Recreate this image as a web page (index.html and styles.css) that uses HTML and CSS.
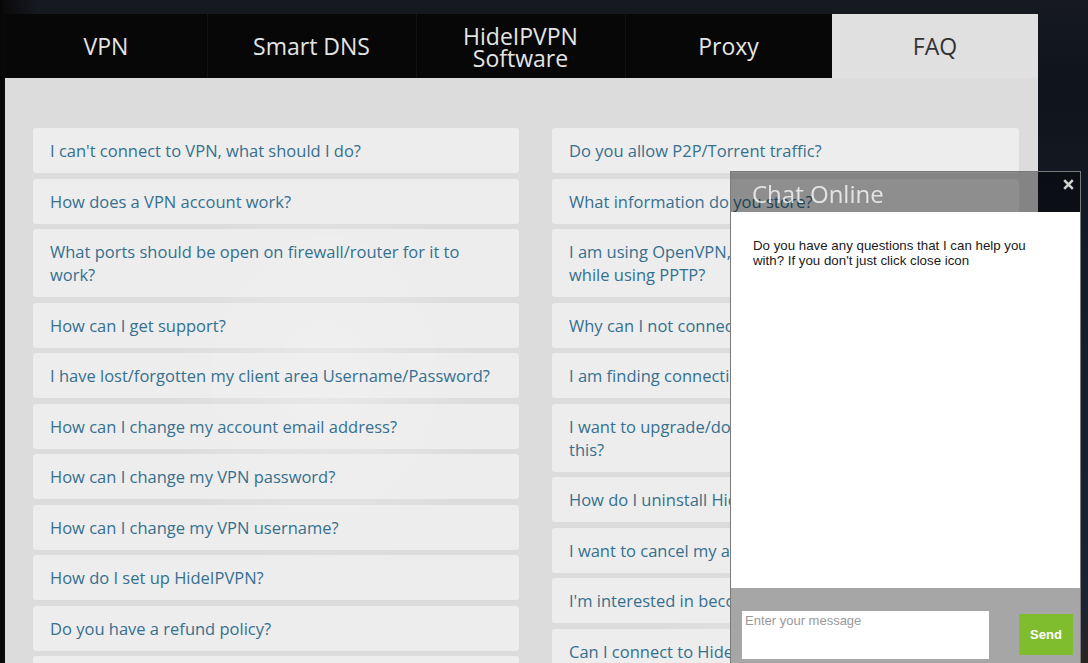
FILE: index.html
```html
<!DOCTYPE html>
<html lang="en">
<head>
<meta charset="utf-8">
<title>FAQ - HideIPVPN</title>
<link rel="stylesheet" href="styles.css">
</head>
<body>
<div class="page">
  <nav class="tabs">
    <div class="tab t1">VPN</div>
    <div class="tab t2">Smart DNS</div>
    <div class="tab t3 tab-two">HideIPVPN<br>Software</div>
    <div class="tab t4">Proxy</div>
    <div class="tab t5 active">FAQ</div>
  </nav>
  <main class="panel">
    <div class="faq-col left">
      <div class="faq">I can't connect to VPN, what should I do?</div>
      <div class="faq">How does a VPN account work?</div>
      <div class="faq">What ports should be open on firewall/router for it to work?</div>
      <div class="faq">How can I get support?</div>
      <div class="faq">I have lost/forgotten my client area Username/Password?</div>
      <div class="faq">How can I change my account email address?</div>
      <div class="faq">How can I change my VPN password?</div>
      <div class="faq">How can I change my VPN username?</div>
      <div class="faq">How do I set up HideIPVPN?</div>
      <div class="faq">Do you have a refund policy?</div>
      <div class="faq">Which payment methods do you accept?</div>
    </div>
    <div class="faq-col right">
      <div class="faq">Do you allow P2P/Torrent traffic?</div>
      <div class="faq">What information do you store?</div>
      <div class="faq">I am using OpenVPN, why is my speed different<br>while using PPTP?</div>
      <div class="faq">Why can I not connect to some servers?</div>
      <div class="faq">I am finding connection speeds slow?</div>
      <div class="faq">I want to upgrade/downgrade my plan, how can I do<br>this?</div>
      <div class="faq">How do I uninstall HideIPVPN?</div>
      <div class="faq">I want to cancel my account</div>
      <div class="faq">I'm interested in becoming an affiliate</div>
      <div class="faq">Can I connect to HideIPVPN from my router?</div>
    </div>
  </main>
</div>

<aside class="chat">
  <div class="chat-head">
    <span class="chat-title">Chat Online</span>
    <svg class="chat-close" width="11" height="11" viewBox="0 0 11 11" aria-label="close">
      <path d="M1.2 1.2 L9.8 9.8 M9.8 1.2 L1.2 9.8" stroke="#d2d2d2" stroke-width="2.6" stroke-linecap="butt" fill="none"/>
    </svg>
  </div>
  <div class="chat-body">
    <p class="chat-msg">Do you have any questions that I can help you with? If you don't just click close icon</p>
  </div>
  <div class="chat-foot">
    <textarea class="chat-input" placeholder="Enter your message"></textarea>
    <button class="chat-send">Send</button>
  </div>
</aside>
</body>
</html>
```

FILE: styles.css
```css
html, body {
  margin: 0;
  padding: 0;
}

body {
  background:
    linear-gradient(90deg, #060606 0px, #0b0b0c 5px, rgba(0,0,0,0) 40px),
    linear-gradient(180deg, #161a20 0px, #10141b 80px, #161d2a 300px, #1a2233 600px, #2a2420 663px);
  background-color: #141a25;
  min-height: 663px;
  overflow: hidden;
  font-family: "Open Sans", "Liberation Sans", sans-serif;
}

.page {
  width: 1033px;
  margin-left: 5px;
  padding-top: 14px;
}

/* Tabs */
.tabs {
  display: flex;
  height: 64px;
  background: #070707;
}

.tab {
  flex: none;
  display: flex;
  align-items: center;
  justify-content: center;
  text-align: center;
  color: #e4e4e4;
  font-size: 23px;
  line-height: 22px;
  box-shadow: inset 1px 0 0 #131313;
}

.t1 { width: 202px; box-shadow: none; }
.t2 { width: 209px; }
.t3 { width: 209px; }
.t4 { width: 207px; }
.t5 { width: 206px; }

.tab-two {
  padding-top: 2px;
}

.tab.active {
  background: #e0e0e0;
  color: #333333;
  box-shadow: none;
}

/* Panel */
.panel {
  background:
    radial-gradient(ellipse 160px 200px at 320px 300px, rgba(255,255,255,0.35), rgba(255,255,255,0) 100%),
    radial-gradient(ellipse 260px 160px at 900px 600px, rgba(255,245,235,0.35), rgba(255,255,255,0) 100%),
    #dcdcdc;
  padding: 50px 19px 40px 28px;
  display: grid;
  grid-template-columns: 486px 467px;
  column-gap: 33px;
  min-height: 600px;
}

.faq-col {
  display: flex;
  flex-direction: column;
  gap: 5.5px;
}

.faq {
  background: rgba(240, 240, 240, 0.82);
  border-radius: 3px;
  padding: 11px 17px;
  font-size: 16.5px;
  line-height: 23px;
  color: #36708f;
}

/* Chat */
.chat {
  position: fixed;
  left: 730px;
  top: 171px;
  width: 349px;
  height: 520px;
  border: 1px solid #7a7a7a;
  display: flex;
  flex-direction: column;
}

.chat-head {
  height: 40px;
  background: rgba(0, 0, 0, 0.4);
  display: flex;
  align-items: center;
  justify-content: space-between;
  padding: 0 6px 0 21px;
}

.chat-title {
  font-family: "Open Sans", "Liberation Sans", sans-serif;
  font-size: 24px;
  color: rgba(255, 255, 255, 0.75);
  margin-top: 2px;
}

.chat-close {
  align-self: flex-start;
  margin-top: 7px;
}

.chat-body {
  height: 376px;
  background: #ffffff;
  padding: 26px 0 0 22px;
  box-sizing: border-box;
}

.chat-msg {
  margin: 0;
  max-width: 286px;
  font-family: "Liberation Sans", Arial, sans-serif;
  font-size: 13.3px;
  line-height: 15px;
  color: #1a1a1a;
}

.chat-foot {
  flex: 1;
  background: #a6a6a6;
  display: flex;
  align-items: flex-start;
  padding: 23px 7px 0 11px;
}

.chat-input {
  width: 247px;
  height: 48px;
  box-sizing: border-box;
  border: none;
  margin: 0;
  padding: 2px 3px;
  resize: none;
  font-family: "Liberation Sans", Arial, sans-serif;
  font-size: 13px;
  background: #ffffff;
  outline: none;
}

.chat-input::placeholder {
  color: #9a9a9a;
}

.chat-send {
  margin-left: 30px;
  margin-top: 3px;
  width: 54px;
  height: 41px;
  border: none;
  background: #80bd2e;
  color: #ffffff;
  font-family: "Liberation Sans", Arial, sans-serif;
  font-weight: bold;
  font-size: 13px;
  padding: 0;
}
```
